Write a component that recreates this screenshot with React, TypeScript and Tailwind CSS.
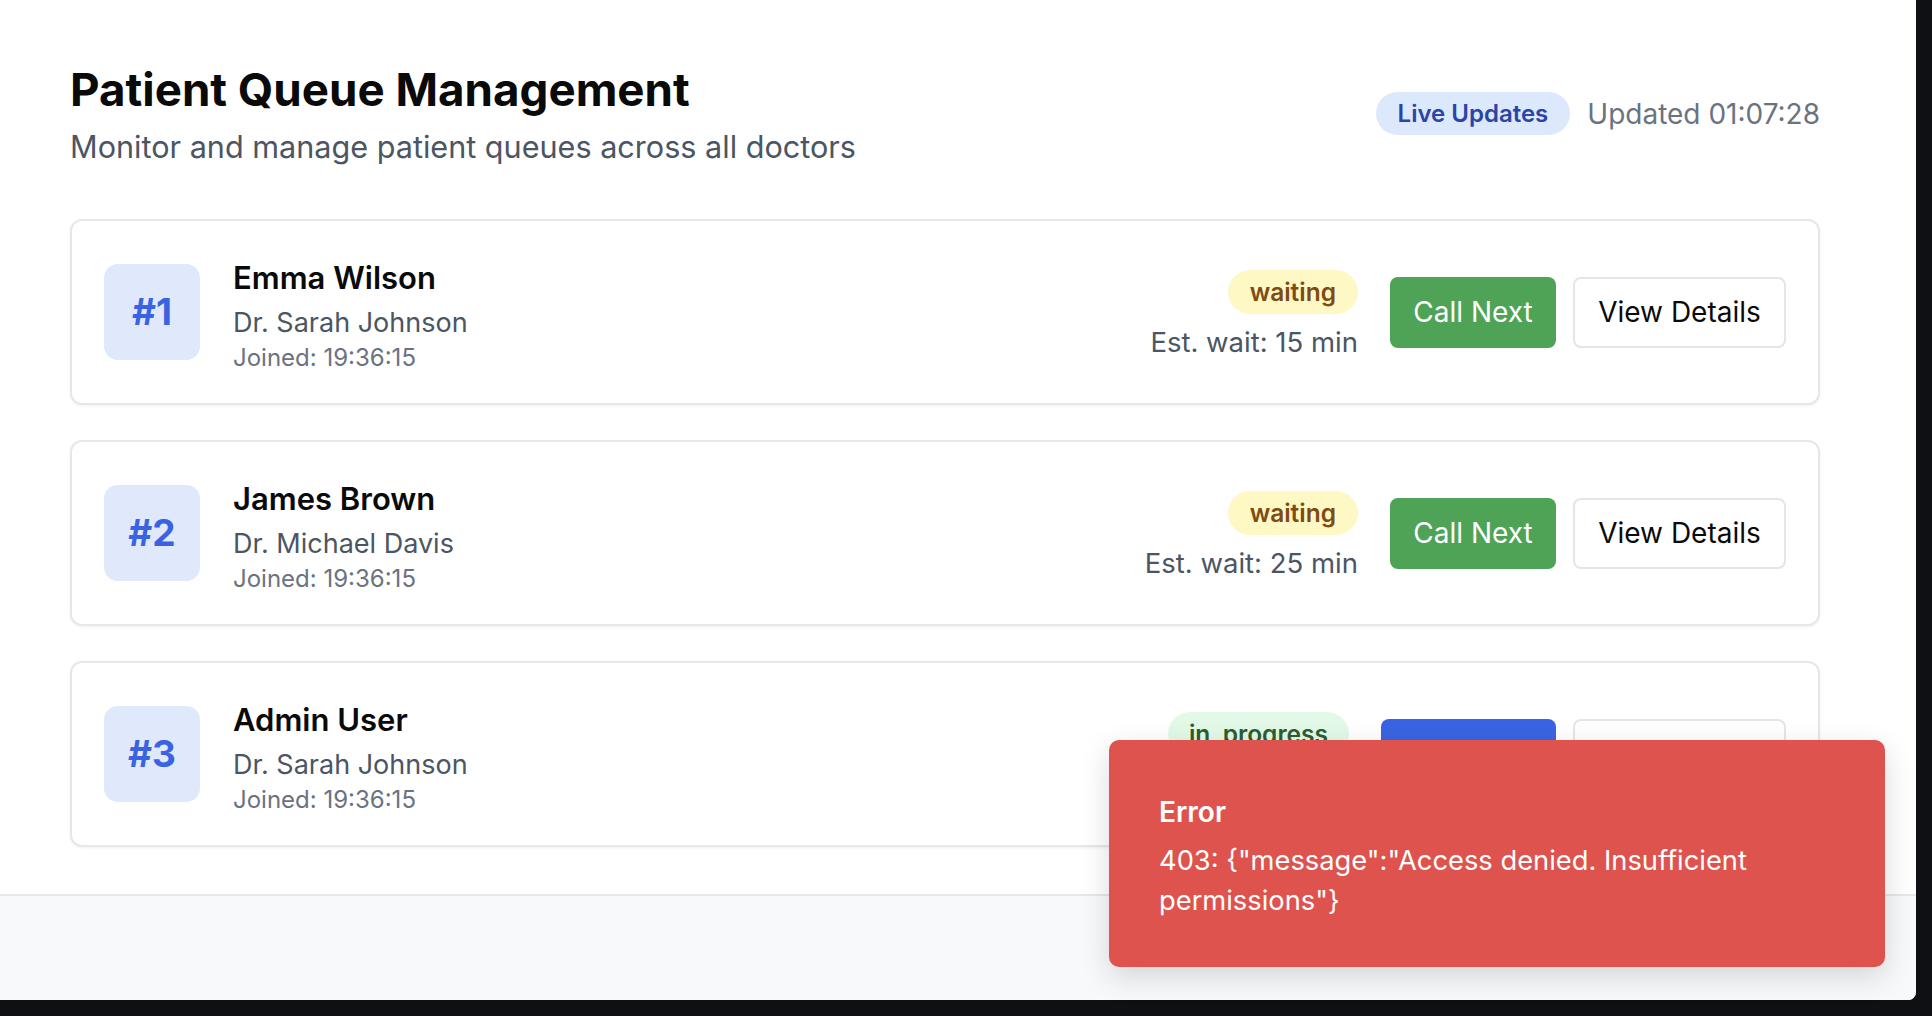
import React from "react";

type Row = {
  n: number;
  name: string;
  doctor: string;
  joined: string;
  status: "waiting" | "in_progress";
  wait?: string;
};

const rows: Row[] = [
  { n: 1, name: "Emma Wilson", doctor: "Dr. Sarah Johnson", joined: "19:36:15", status: "waiting", wait: "15 min" },
  { n: 2, name: "James Brown", doctor: "Dr. Michael Davis", joined: "19:36:15", status: "waiting", wait: "25 min" },
  { n: 3, name: "Admin User", doctor: "Dr. Sarah Johnson", joined: "19:36:15", status: "in_progress" },
];

function Card({ r }: { r: Row }) {
  return (
    <div className="h-[186px] rounded-[12px] border-2 border-[#e7e7e9] bg-white px-[32px] flex items-center shadow-[0_1px_3px_rgba(0,0,0,0.06)]">
      <div className="w-[96px] h-[96px] rounded-[14px] bg-[#dfe9fb] flex items-center justify-center text-[37px] font-bold text-[#3a63e1]">
        #{r.n}
      </div>
      <div className="ml-[33px] flex flex-col mt-[7px]">
        <div className="text-[31px] leading-[40px] font-semibold text-[#0a0a0a]">{r.name}</div>
        <div className="mt-[6px] text-[27px] leading-[38px] text-[#4b5563]">{r.doctor}</div>
        <div className="text-[24px] leading-[32px] text-[#6b7280]">Joined: {r.joined}</div>
      </div>
      <div className="ml-auto flex items-center">
        <div className="flex flex-col items-end mt-[7px]">
          {r.status === "waiting" ? (
            <span className="h-[44px] px-[22px] rounded-full bg-[#fef8c5] text-[#7f4b13] text-[24.5px] font-semibold flex items-center">
              waiting
            </span>
          ) : (
            <span className="h-[44px] px-[21px] rounded-full bg-[#e2f9e7] text-[#2c5e31] text-[24.5px] font-semibold flex items-center">
              in_progress
            </span>
          )}
          {r.wait && (
            <div className="mt-[9px] text-[27.5px] leading-[38px] text-[#4b5563]">Est. wait: {r.wait}</div>
          )}
          {!r.wait && <div className="h-[47px]" />}
        </div>
        {r.status === "waiting" ? (
          <button className="ml-[32px] w-[166px] h-[71px] rounded-[8px] bg-[#4ea357] text-white text-[28px]">
            Call Next
          </button>
        ) : (
          <button className="ml-[32px] w-[175px] h-[71px] rounded-[8px] bg-[#3a64e3] text-white text-[28px]">
            Complete
          </button>
        )}
        <button className="ml-[17px] w-[213px] h-[71px] rounded-[8px] border-2 border-[#e5e5e5] bg-white text-[#0a0a0a] text-[28px]">
          View Details
        </button>
      </div>
    </div>
  );
}

export default function App() {
  return (
    <div
      className="w-[1932px] h-[1016px] bg-[#0e1014] overflow-hidden relative"
      style={{ fontFamily: "Inter, 'Noto Sans', sans-serif" }}
    >
      <div className="w-[1916px] h-[1000px] bg-white rounded-br-[8px] overflow-hidden flex flex-col">
        <div className="flex-1 pl-[70px] pr-[96px] pt-[63px]">
          <div className="flex items-start justify-between">
            <div>
              <h1 className="text-[45.7px] leading-[54px] font-bold text-[#0a0a0a]">
                Patient Queue Management
              </h1>
              <p className="mt-[10px] text-[30.6px] leading-[40px] text-[#4b5563]">
                Monitor and manage patient queues across all doctors
              </p>
            </div>
            <div className="flex items-center gap-[17px] mt-[29px]">
              <span className="h-[43px] px-[22px] rounded-full bg-[#dce8fb] text-[#2a44a8] text-[24px] font-semibold flex items-center">
                Live Updates
              </span>
              <span className="text-[28px] text-[#6b7280]">Updated 01:07:28</span>
            </div>
          </div>
          <div className="mt-[52px] flex flex-col gap-[35px]">
            {rows.map((r) => (
              <Card key={r.n} r={r} />
            ))}
          </div>
        </div>
        <div className="h-[106px] border-t-2 border-[#e5e7eb] bg-[#f8f9fb]" />
      </div>
      <div className="absolute left-[1109px] top-[740px] w-[776px] h-[227px] rounded-[10px] bg-[#de534d] shadow-[0_10px_30px_rgba(0,0,0,0.15)] px-[50px] pt-[54px] text-white">
        <div className="text-[28px] leading-[36px] font-semibold">Error</div>
        <div className="mt-[11px] text-[27.3px] leading-[40px] w-[620px]">
          403: {"{"}"message":"Access denied. Insufficient permissions"{"}"}
        </div>
      </div>
    </div>
  );
}
